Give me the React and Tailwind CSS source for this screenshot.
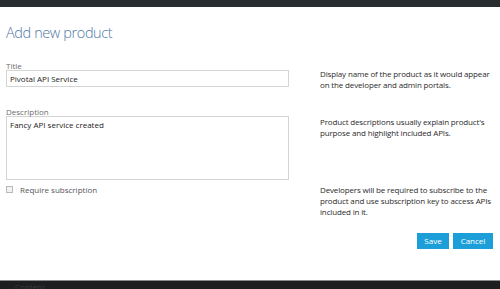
import React from 'react';

const font = { fontFamily: '"Open Sans", "Noto Sans", sans-serif' };

const App = () => {
    return (
        <div className="w-[500px] h-[289px] flex flex-col overflow-hidden bg-white" style={font}>
            {/* Top bar */}
            <div className="h-[7px] bg-[#2a2d30] shrink-0" />

            <div className="flex-1 bg-white pl-[6px] pr-[7px]">
                <h1 className="mt-[14px] text-[14.5px] leading-[24px] font-light text-[#4f77a6] tracking-[-0.4px]">
                    Add new product
                </h1>

                {/* Title row */}
                <div className="flex mt-[16px]">
                    <div className="w-[283px] shrink-0">
                        <label className="block text-[8px] leading-[10px] text-[#6b6b6b]">Title</label>
                        <div className="mt-[-1px] h-[17px] border border-[#d4d4d4] px-[3px] text-[8px] leading-[15px] text-[#222]">
                            Pivotal API Service
                        </div>
                    </div>
                    <p className="ml-[31px] mt-[7px] w-[178px] text-[8px] leading-[11px] tracking-[-0.15px] text-[#2b2b2b]">
                        Display name of the product as it would appear on the developer and admin portals.
                    </p>
                </div>

                {/* Description row */}
                <div className="flex mt-[17px]">
                    <div className="w-[283px] shrink-0">
                        <label className="block text-[8px] leading-[10px] text-[#6b6b6b]">Description</label>
                        <div className="mt-[-1px] h-[64px] border border-[#d4d4d4] px-[3px] pt-[2px] text-[8px] leading-[11px] text-[#222]">
                            Fancy API service created
                        </div>
                    </div>
                    <p className="ml-[31px] mt-[9px] w-[178px] text-[8px] leading-[11px] tracking-[-0.15px] text-[#2b2b2b]">
                        Product descriptions usually explain product's purpose and highlight included APIs.
                    </p>
                </div>

                {/* Subscription row */}
                <div className="flex mt-[4px]">
                    <div className="w-[283px] shrink-0 flex items-start">
                        <span className="mt-[2px] w-[7px] h-[7px] border border-[#b8b8b8] bg-[#f2f2f2] shrink-0" />
                        <span className="ml-[7px] text-[8px] leading-[11px] text-[#555]">Require subscription</span>
                    </div>
                    <p className="ml-[31px] w-[178px] text-[8px] leading-[11px] tracking-[-0.15px] text-[#2b2b2b]">
                        Developers will be required to subscribe to the product and use subscription key to access APIs included in it.
                    </p>
                </div>

                {/* Actions */}
                <div className="flex justify-end gap-[4px] mt-[16px]">
                    <button className="w-[32px] h-[16px] bg-[#1c9fd9] text-white text-[8px] leading-[16px]">Save</button>
                    <button className="w-[40px] h-[16px] bg-[#1c9fd9] text-white text-[8px] leading-[16px]">Cancel</button>
                </div>
            </div>

            {/* Bottom bar */}
            <div className="h-[9px] shrink-0 bg-[#1d1e1f] border-t border-[#8a8a8a] overflow-hidden pl-[15px]">
                <span className="block text-[8px] leading-[8px] mt-[2px] text-[#3a3a3a]">Content</span>
            </div>
        </div>
    );
};

export default App;
